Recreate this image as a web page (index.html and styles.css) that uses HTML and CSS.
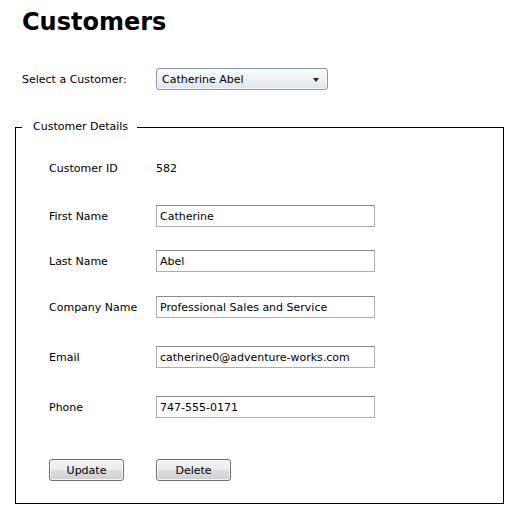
FILE: index.html
```html
<!DOCTYPE html>
<html>
<head>
<meta charset="utf-8">
<link rel="stylesheet" href="styles.css">
</head>
<body>
<h1 class="title">Customers</h1>
<div class="select-row">
  <span class="label">Select a Customer:</span>
  <div class="combo">
    <span>Catherine Abel</span>
    <span class="arrow"></span>
  </div>
</div>
<fieldset class="details">
  <legend class="legend">Customer Details</legend>
  <div class="row r1"><span class="label">Customer ID</span><span class="value">582</span></div>
  <div class="row r2"><span class="label">First Name</span><div class="textbox">Catherine</div></div>
  <div class="row r3"><span class="label">Last Name</span><div class="textbox">Abel</div></div>
  <div class="row r4"><span class="label">Company Name</span><div class="textbox">Professional Sales and Service</div></div>
  <div class="row r5"><span class="label">Email</span><div class="textbox">catherine0@adventure-works.com</div></div>
  <div class="row r6"><span class="label">Phone</span><div class="textbox">747-555-0171</div></div>
  <div class="row buttons"><button class="btn">Update</button><button class="btn">Delete</button></div>
</fieldset>
</body>
</html>
```
FILE: styles.css
```css
html, body {
  margin: 0;
  padding: 0;
  background: #fff;
}
body {
  font-family: "DejaVu Sans", Verdana, sans-serif;
  font-size: 11px;
  color: #000;
  width: 519px;
}
.title {
  margin: 8px 0 0 22px;
  font-size: 24px;
  line-height: 28px;
  font-weight: bold;
}
.select-row {
  display: flex;
  align-items: center;
  margin: 32px 0 0 22px;
}
.select-row .label {
  width: 134px;
}
.combo {
  box-sizing: border-box;
  width: 172px;
  height: 22px;
  border: 1px solid #7b98b4;
  border-radius: 3px;
  background: linear-gradient(#fbfcfd, #eef2f5 50%, #dce4ec);
  box-shadow: inset 0 0 0 1px rgba(255,255,255,0.7);
  display: flex;
  align-items: center;
  justify-content: space-between;
  padding: 0 8px 0 5px;
}
.arrow {
  width: 0;
  height: 0;
  border-left: 3.5px solid transparent;
  border-right: 3.5px solid transparent;
  border-top: 4px solid #222;
  margin-top: 1px;
}
.details {
  box-sizing: border-box;
  margin: 30px 0 0 15px;
  width: 489px;
  height: 384px;
  border: 1px solid #000;
  padding: 0 0 0 33px;
  min-width: 0;
}
.legend {
  margin-left: -27px;
  padding: 0 9px 0 11px;
  line-height: 14px;
}
.row {
  display: flex;
  align-items: center;
  height: 22px;
}
.row .label {
  width: 107px;
}
.r1 { margin-top: 23px; }
.r2 { margin-top: 26px; }
.r3 { margin-top: 23px; }
.r4 { margin-top: 24px; }
.r5 { margin-top: 28px; }
.r6 { margin-top: 28px; }
.buttons {
  margin-top: 41px;
  gap: 32px;
}
.textbox {
  box-sizing: border-box;
  width: 219px;
  height: 22px;
  border: 1px solid #abadb3;
  border-top-color: #8a8d94;
  padding: 0 3px;
  display: flex;
  align-items: center;
  white-space: nowrap;
}
.btn {
  box-sizing: border-box;
  width: 75px;
  height: 22px;
  margin: 0;
  border: 1px solid #707070;
  border-radius: 3px;
  background: linear-gradient(#f3f3f3, #ebebeb 50%, #dddddd 51%, #cfcfcf);
  box-shadow: inset 0 0 0 1px rgba(255,255,255,0.8);
  font-family: "DejaVu Sans", Verdana, sans-serif;
  font-size: 11px;
  color: #000;
  padding: 0;
}
```
